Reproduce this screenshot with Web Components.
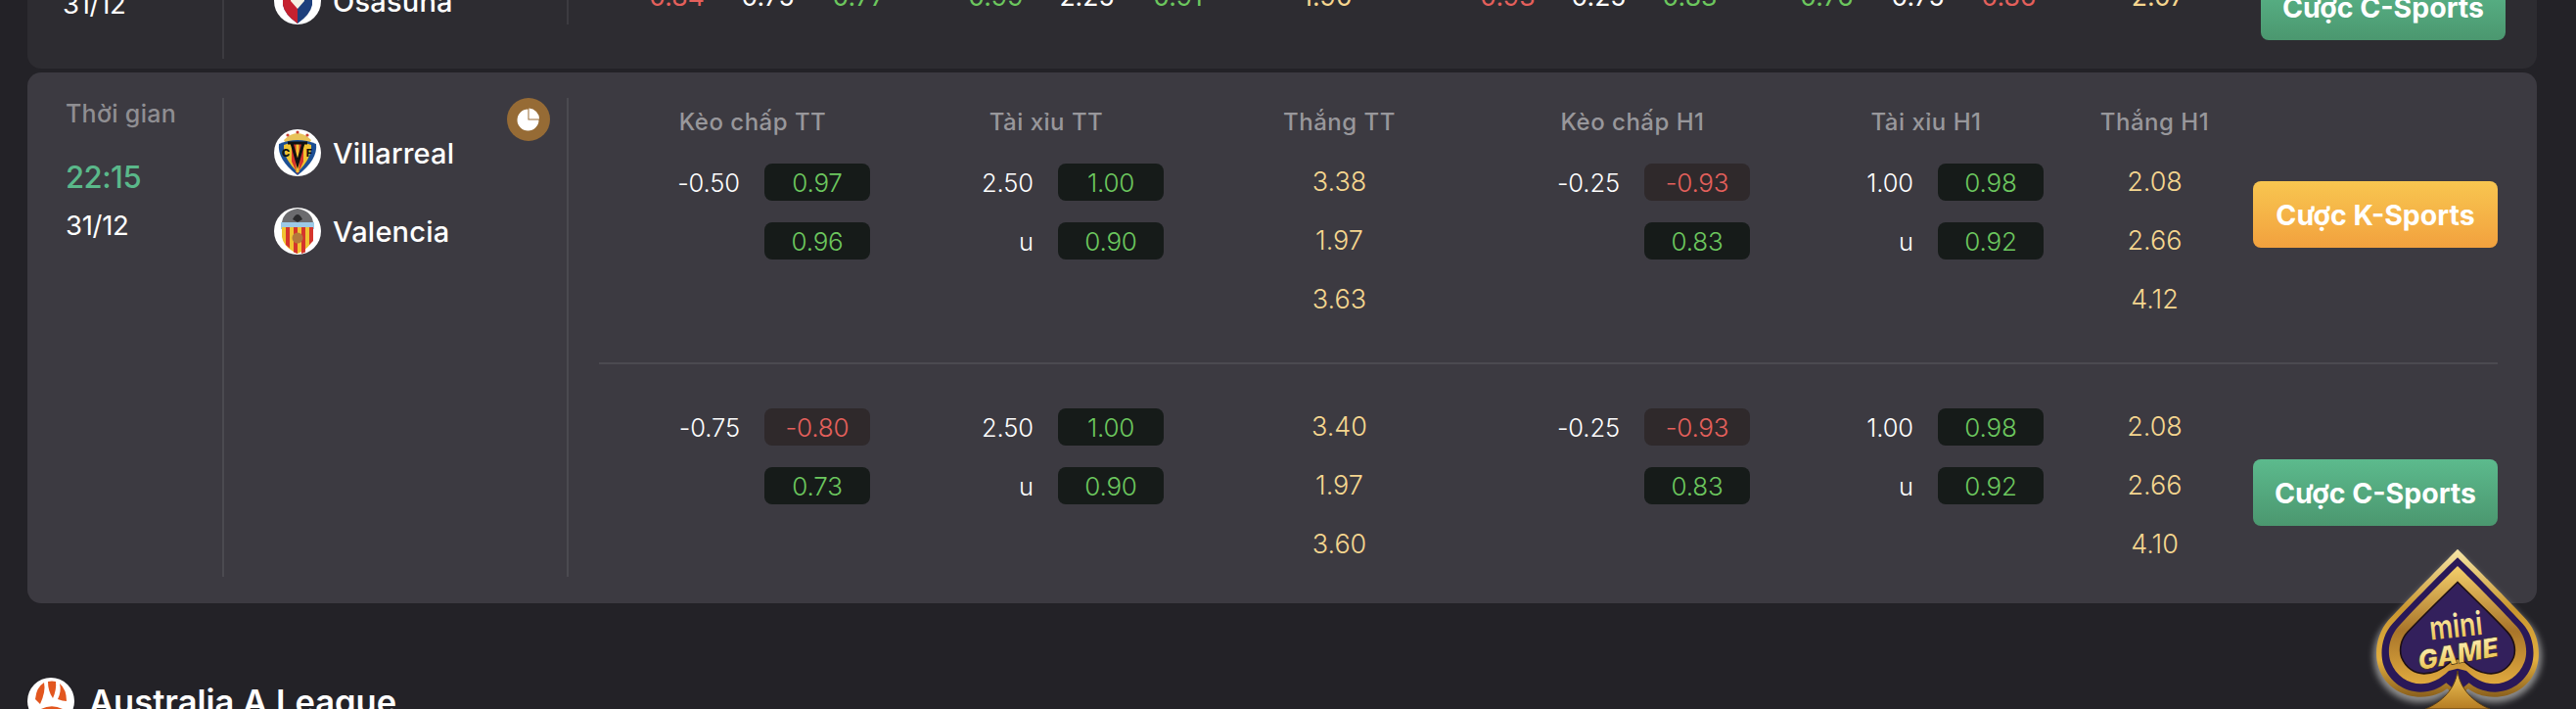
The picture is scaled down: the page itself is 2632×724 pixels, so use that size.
<!DOCTYPE html>
<html lang="vi">
<head>
<meta charset="utf-8">
<title>Kèo thể thao</title>
<style>
html, body { margin: 0; height: 724px; overflow: hidden; background: #232227; }
body { font-family: Inter, "Liberation Sans", sans-serif; color: #fff; position: relative; }
</style>
</head>
<body>

<sports-list>
  <match-card dim>
    <kick-off slot="time" day="31/12"></kick-off>
    <team-row slot="teams" name="Osasuna">
      <svg viewBox="0 0 48 48"><circle cx="24" cy="24" r="24" fill="#fff"/><path d="M9 9H39V28Q37 38 24 47Q11 38 9 28Z" fill="#1d3f7c"/><path d="M9 9H24V47Q11 38 9 28Z" fill="#c5212f"/><path d="M17 6H31V24L24 32L17 24Z" fill="#f6f1e2"/><circle cx="24" cy="14" r="5" fill="#b9903f"/></svg>
    </team-row>
    <flat-row slot="odds">
      <flat-group a="-0.84" b="0.75" c="0.77"></flat-group>
      <flat-group a="0.99" b="2.25" c="0.91"></flat-group>
      <flat-win>1.90</flat-win>
      <flat-group a="-0.93" b="0.25" c="0.83"></flat-group>
      <flat-group a="0.76" b="0.75" c="-0.86"></flat-group>
      <flat-win>2.07</flat-win>
      <bet-button slot="action" kind="c">Cược C-Sports</bet-button>
    </flat-row>
  </match-card>

  <match-card>
    <kick-off slot="time" label="Thời gian" hour="22:15" day="31/12"></kick-off>
    <team-row slot="teams" name="Villarreal">
      <svg viewBox="0 0 48 48"><circle cx="24" cy="24" r="24" fill="#fff"/><path d="M10 11Q24 -3 38 11L36 15H12Z" fill="#e8c35a"/><circle cx="14" cy="6" r="1.6" fill="#c9412f"/><circle cx="24" cy="3" r="1.6" fill="#c9412f"/><circle cx="34" cy="6" r="1.6" fill="#c9412f"/><path d="M5 15Q24 7 43 15Q45 31 24 47Q3 31 5 15Z" fill="#1d4f93"/><path d="M10 16Q24 10 38 16Q39 29 24 44Q9 29 10 16Z" fill="#f0c331"/><path d="M18 13H30V33L24 46L18 33Z" fill="#d5352c"/><path d="M22.5 13H25.5V44H22.5Z" fill="#f0c331"/><path d="M14 14H34M18 14L24 35L30 14" fill="none" stroke="#111" stroke-width="3"/><text x="12" y="28" font-family="Inter, sans-serif" font-size="11" font-weight="800" fill="#111" text-anchor="middle">C</text><text x="36" y="28" font-family="Inter, sans-serif" font-size="11" font-weight="800" fill="#111" text-anchor="middle">F</text></svg>
    </team-row>
    <team-row slot="teams" name="Valencia">
      <svg viewBox="0 0 48 48"><circle cx="24" cy="24" r="24" fill="#fff"/><path d="M8 15Q10 3 24 1Q38 3 40 15Z" fill="#6b6b6e"/><path d="M19 12Q24 2 29 12L24 15Z" fill="#2b2b2d"/><path d="M7 15H41V22H7Z" fill="#9cc9e6"/><path d="M8 20H40V30Q38 41 24 47Q10 41 8 30Z" fill="#f0c331"/><path d="M12 20h4v21.5l-4 -3.5ZM20 20h4v27l-4 -1.5ZM28 20h4v25.5l-4 1.5ZM36 20h4v14l-4 4Z" fill="#d5352c"/><circle cx="24" cy="31" r="5.5" fill="#b3793c"/></svg>
    </team-row>
    <stat-badge slot="teams"></stat-badge>

    <odds-block first>
      <odds-head>Kèo chấp TT</odds-head>
      <odds-head>Tài xỉu TT</odds-head>
      <odds-head>Thắng TT</odds-head>
      <odds-head>Kèo chấp H1</odds-head>
      <odds-head>Tài xỉu H1</odds-head>
      <odds-head>Thắng H1</odds-head>
      <line-cell line="-0.50" a="0.97" b="0.96"></line-cell>
      <line-cell line="2.50" a="1.00" sub="u" b="0.90"></line-cell>
      <win-cell a="3.38" b="1.97" c="3.63"></win-cell>
      <line-cell line="-0.25" a="-0.93" b="0.83"></line-cell>
      <line-cell line="1.00" a="0.98" sub="u" b="0.92"></line-cell>
      <win-cell a="2.08" b="2.66" c="4.12"></win-cell>
      <bet-button slot="action" kind="k">Cược K-Sports</bet-button>
    </odds-block>
    <odds-block>
      <line-cell line="-0.75" a="-0.80" b="0.73"></line-cell>
      <line-cell line="2.50" a="1.00" sub="u" b="0.90"></line-cell>
      <win-cell a="3.40" b="1.97" c="3.60"></win-cell>
      <line-cell line="-0.25" a="-0.93" b="0.83"></line-cell>
      <line-cell line="1.00" a="0.98" sub="u" b="0.92"></line-cell>
      <win-cell a="2.08" b="2.66" c="4.10"></win-cell>
      <bet-button slot="action" kind="c">Cược C-Sports</bet-button>
    </odds-block>
  </match-card>

  <league-head>
    <svg slot="logo" viewBox="0 0 48 48"><circle cx="24" cy="24" r="24" fill="#fff"/><path d="M8 22Q9 10 17 5Q19 14 13 27Z" fill="#e2561f"/><path d="M21 4Q25 3 29 4Q30 12 26 21Q21 14 21 4Z" fill="#e2561f"/><path d="M33 6Q40 12 40 24Q36 24 31 22Q35 14 33 6Z" fill="#e2561f"/><path d="M12 33Q24 26 36 32Q32 40 24 42Q16 40 12 33Z" fill="#e2561f"/></svg>
    Australia A League
  </league-head>
</sports-list>

<mini-game></mini-game>

<script>
window.customElements.define('sports-list',
    class extends HTMLElement {
        constructor() {
            super();
            this.attachShadow({mode: 'open'});
            this.shadowRoot.innerHTML = `
            <style>
            :host { display: flex; flex-direction: column; gap: 4px; margin: 0 40px 0 28px; }
            </style>
            <slot></slot>`;
        }
    }
);

window.customElements.define('match-card',
    class extends HTMLElement {
        __template = `
        <style>
        :host {
            display: flex;
            box-sizing: border-box;
            background: #3c3a41;
            border-radius: 14px;
            padding: 26px 40px 27px 0;
            --rule: #4b4a50;
        }
        .time {
            width: 201px;
            padding-left: 39px;
            box-sizing: border-box;
            border-right: 2px solid var(--rule);
            flex: none;
        }
        .teams {
            position: relative;
            box-sizing: border-box;
            width: 352px;
            flex: none;
            padding: 32px 0 0 51px;
            border-right: 2px solid var(--rule);
            display: flex;
            flex-direction: column;
            gap: 32px;
        }
        .odds {
            flex: 1;
            min-width: 0;
            padding-left: 31px;
            display: flex;
            flex-direction: column;
        }
        :host([dim]) {
            background: #2d2c31;
            height: 200px;
            margin-top: -130px;
            padding: 0 32px 10px 0;
            --rule: #3c3b40;
        }
        :host([dim]) .time {
            padding: 0 0 39px 36px;
            display: flex;
            align-items: flex-end;
        }
        :host([dim]) .teams {
            padding: 0 0 0 51px;
            margin-bottom: 35px;
            justify-content: flex-end;
        }
        :host([dim]) .odds { padding-left: 0; justify-content: flex-end; }
        </style>
        <div class="time"><slot name="time"></slot></div>
        <div class="teams"><slot name="teams"></slot></div>
        <div class="odds"><slot name="odds"></slot><slot></slot></div>`;

        constructor() {
            super();
            this.attachShadow({mode: 'open'});
            const child = document.createElement('template');
            child.innerHTML = this.__template;
            this.shadowRoot.appendChild(child.content.cloneNode(true));
        }
    }
);

window.customElements.define('kick-off',
    class extends HTMLElement {
        constructor() {
            super();
            this.attachShadow({mode: 'open'});
            const label = this.getAttribute('label');
            const hour = this.getAttribute('hour');
            const day = this.getAttribute('day');
            this.shadowRoot.innerHTML = `
            <style>
            :host { display: block; }
            div { white-space: nowrap; }
            .label { font-size: 25px; line-height: 32px; color: #8f8e92; font-weight: 500; letter-spacing: 0.3px; }
            .hour { font-size: 31px; line-height: 40px; margin-top: 29px; color: #5ab88a; font-weight: 500; letter-spacing: -0.5px; }
            .day { font-size: 27.5px; line-height: 34px; margin-top: 12px; color: #fff; font-weight: 400; letter-spacing: -0.3px; }
            :host(:not([label])) .day { margin-top: 0; }
            </style>
            ${label ? `<div class="label">${label}</div>` : ''}
            ${hour ? `<div class="hour">${hour}</div>` : ''}
            <div class="day">${day}</div>`;
        }
    }
);

window.customElements.define('team-row',
    class extends HTMLElement {
        constructor() {
            super();
            this.attachShadow({mode: 'open'});
            this.shadowRoot.innerHTML = `
            <style>
            :host { display: flex; align-items: center; gap: 12px; height: 48px; }
            ::slotted(svg) { width: 48px; height: 48px; flex: none; }
            span { font-size: 29px; font-weight: 500; color: #fff; white-space: nowrap; letter-spacing: 0.2px; }
            </style>
            <slot></slot><span>${this.getAttribute('name')}</span>`;
        }
    }
);

window.customElements.define('stat-badge',
    class extends HTMLElement {
        constructor() {
            super();
            this.attachShadow({mode: 'open'});
            this.shadowRoot.innerHTML = `
            <style>
            /* sits over the corner of the team column */
            :host { position: absolute; top: 0; right: 17px; width: 44px; height: 44px; }
            svg { display: block; }
            </style>
            <svg viewBox="0 0 44 44" width="44" height="44">
            <circle cx="22" cy="22" r="22" fill="#966b35"/>
            <path d="M21.5 11.5A11 11 0 1 0 32.5 22.5H21.5Z" fill="#fff"/>
            <path d="M22.5 10.5A11 11 0 0 1 33 21.5H22.5Z" fill="#fff"/>
            </svg>`;
        }
    }
);

window.customElements.define('odds-block',
    class extends HTMLElement {
        __template = `
        <style>
        :host {
            display: flex;
            align-items: center;
            box-sizing: border-box;
            padding-top: 45px;
            border-top: 2px solid #4b4a50;
        }
        :host([first]) {
            border-top: 0;
            padding-top: 0;
            margin-bottom: 32px;
        }
        .grid {
            display: grid;
            grid-template-columns: 300px 300px 299px 300px 300px 167px;
            margin-left: 7px;
            padding-bottom: 14px;
        }
        :host([first]) .grid { padding-bottom: 13px; }
        .action { margin-left: 17px; }
        </style>
        <div class="grid"><slot></slot></div>
        <div class="action"><slot name="action"></slot></div>`;

        constructor() {
            super();
            this.attachShadow({mode: 'open'});
            const child = document.createElement('template');
            child.innerHTML = this.__template;
            this.shadowRoot.appendChild(child.content.cloneNode(true));
        }
    }
);

window.customElements.define('odds-head',
    class extends HTMLElement {
        constructor() {
            super();
            this.attachShadow({mode: 'open'});
            this.shadowRoot.innerHTML = `
            <style>
            :host {
                display: flex;
                align-items: center;
                justify-content: center;
                height: 48px;
                margin-bottom: 19px;
                font-size: 24px;
                font-weight: 500;
                letter-spacing: 0.5px;
                color: #98979b;
                white-space: nowrap;
            }
            </style>
            <slot></slot>`;
        }
    }
);

window.customElements.define('odds-pill',
    class extends HTMLElement {
        constructor() {
            super();
            this.attachShadow({mode: 'open'});
            this.shadowRoot.innerHTML = `
            <style>
            :host {
                display: flex;
                align-items: center;
                justify-content: center;
                width: 108px;
                height: 38px;
                border-radius: 8px;
                background: #161b19;
                color: #6cc75e;
                font-size: 26px;
                font-weight: 300;
                letter-spacing: -0.2px;
            }
            :host([down]) { background: #2f292b; color: #e4605c; }
            </style>
            <slot></slot>`;
        }
    }
);

window.customElements.define('line-cell',
    class extends HTMLElement {
        constructor() {
            super();
            this.attachShadow({mode: 'open'});
            const pill = (v) => `<odds-pill ${v.startsWith('-') ? 'down' : ''}>${v}</odds-pill>`;
            const a = this.getAttribute('a');
            const b = this.getAttribute('b');
            this.shadowRoot.innerHTML = `
            <style>
            :host { display: flex; flex-direction: column; gap: 22px; height: 158px; padding-right: 30px; }
            .row { display: flex; justify-content: flex-end; align-items: center; gap: 25px; }
            span { font-size: 25.5px; font-weight: 300; color: #fff; letter-spacing: -0.1px; }
            </style>
            <div class="row"><span>${this.getAttribute('line')}</span>${pill(a)}</div>
            <div class="row"><span>${this.getAttribute('sub') || ''}</span>${pill(b)}</div>`;
        }
    }
);

window.customElements.define('win-cell',
    class extends HTMLElement {
        constructor() {
            super();
            this.attachShadow({mode: 'open'});
            const cells = ['a', 'b', 'c'].map(k => `<div>${this.getAttribute(k)}</div>`).join('');
            this.shadowRoot.innerHTML = `
            <style>
            :host { display: flex; flex-direction: column; gap: 22px; height: 158px; }
            div {
                height: 38px;
                line-height: 38px;
                text-align: center;
                color: #f5d68f;
                font-size: 27px;
                font-weight: 300;
            }
            </style>
            ${cells}`;
        }
    }
);

window.customElements.define('bet-button',
    class extends HTMLElement {
        constructor() {
            super();
            this.attachShadow({mode: 'open'});
            this.shadowRoot.innerHTML = `
            <style>
            :host {
                display: flex;
                align-items: center;
                justify-content: center;
                width: 250px;
                height: 68px;
                border-radius: 8px;
                color: #fff;
                font-size: 28.5px;
                font-weight: 700;
                white-space: nowrap;
                background: linear-gradient(#5cba8d, #4b976f);
            }
            :host([kind="k"]) { background: linear-gradient(#f8c650, #f2a13e); }
            </style>
            <slot></slot>`;
        }
    }
);

window.customElements.define('flat-row',
    class extends HTMLElement {
        constructor() {
            super();
            this.attachShadow({mode: 'open'});
            this.shadowRoot.innerHTML = `
            <style>
            :host { display: flex; align-items: flex-end; padding-left: 64px; }
            .grid {
                display: grid;
                grid-template-columns: 279px 279px 118px 311px 279px 118px;
                column-gap: 47px;
                padding-bottom: 45px;
            }
            .action { margin-left: 46px; padding-bottom: 19px; }
            </style>
            <div class="grid"><slot></slot></div>
            <div class="action"><slot name="action"></slot></div>`;
        }
    }
);

window.customElements.define('flat-group',
    class extends HTMLElement {
        constructor() {
            super();
            this.attachShadow({mode: 'open'});
            const cell = (k, cls) => `<div class="${cls}">${this.getAttribute(k).replace('-', '')}</div>`;
            const tone = (k) => this.getAttribute(k).startsWith('-') ? 'down' : 'up';
            this.shadowRoot.innerHTML = `
            <style>
            :host { display: grid; grid-template-columns: repeat(3, 93px); justify-content: end; }
            div { text-align: center; line-height: 38px; font-size: 26.5px; font-weight: 400; }
            .up { color: #6cc75e; }
            .down { color: #e4605c; }
            .mid { color: #fff; }
            </style>
            ${cell('a', tone('a'))}${cell('b', 'mid')}${cell('c', tone('c'))}`;
        }
    }
);

window.customElements.define('flat-win',
    class extends HTMLElement {
        constructor() {
            super();
            this.attachShadow({mode: 'open'});
            this.shadowRoot.innerHTML = `
            <style>
            :host { display: block; text-align: center; line-height: 38px; font-size: 26.5px; color: #f5d68f; }
            </style>
            <slot></slot>`;
        }
    }
);

window.customElements.define('league-head',
    class extends HTMLElement {
        constructor() {
            super();
            this.attachShadow({mode: 'open'});
            this.shadowRoot.innerHTML = `
            <style>
            :host {
                display: flex;
                align-items: center;
                gap: 15px;
                margin-top: 72px;
                height: 48px;
                font-size: 34.5px;
                font-weight: 600;
                color: #fff;
                white-space: nowrap;
            }
            ::slotted(svg) { width: 48px; height: 48px; flex: none; }
            </style>
            <slot name="logo"></slot><slot></slot>`;
        }
    }
);

window.customElements.define('mini-game',
    class extends HTMLElement {
        __template = `
        <style>
        /* floating widget pinned over the bottom right corner */
        :host { position: absolute; right: 0; bottom: 0; width: 292px; height: 284px; }
        svg { display: block; }
        text { font-family: Inter, "Liberation Sans", sans-serif; }
        </style>
        <svg viewBox="0 0 876 852" width="292" height="284">
        <defs>
        <linearGradient id="gold" x1="0" y1="0" x2="0" y2="1">
        <stop offset="0" stop-color="#f7e7a8"/><stop offset=".4" stop-color="#c9962f"/><stop offset=".75" stop-color="#e2ae3f"/><stop offset="1" stop-color="#8a5f1c"/>
        </linearGradient>
        <linearGradient id="ring" x1="0" y1="0" x2="0" y2="1">
        <stop offset="0" stop-color="#f4cf6b"/><stop offset=".55" stop-color="#a9752a"/><stop offset="1" stop-color="#e0a93e"/>
        </linearGradient>
        <linearGradient id="stem" x1="0" y1="0" x2="0" y2="1">
        <stop offset="0" stop-color="#f3c95a"/><stop offset="1" stop-color="#b57c23"/>
        </linearGradient>
        <linearGradient id="word" x1="0" y1="0" x2="0" y2="1">
        <stop offset="0" stop-color="#fff6c4"/><stop offset="1" stop-color="#e8b93a"/>
        </linearGradient>
        <filter id="soft" x="-10%" y="-10%" width="120%" height="120%"><feGaussianBlur stdDeviation="10"/></filter>
        </defs>
        <path d="M513 372C560 420 660 520 730 590C770 630 780 690 762 740C740 800 680 832 625 832C590 832 565 822 545 805L513 830L481 805C461 822 436 832 401 832C346 832 286 800 264 740C246 690 256 630 296 590C366 520 466 420 513 372Z" fill="#8d8d8d" filter="url(#soft)"/>
        <path d="M513 362C560 410 660 510 725 580C760 620 770 680 755 725C735 785 680 815 625 815C590 815 565 805 545 790L513 815L481 790C461 805 436 815 401 815C346 815 291 785 271 725C256 680 266 620 301 580C366 510 466 410 513 362Z" fill="url(#gold)"/>
        <path d="M513 388C560 432 650 525 712 590C745 625 752 680 740 718C722 770 675 800 628 800C595 800 570 790 548 772L513 800L478 772C456 790 431 800 398 800C351 800 304 770 286 718C274 680 281 625 314 590C376 525 466 432 513 388Z" fill="#2a1858"/>
        <path d="M513 414C556 456 640 540 695 600C722 630 730 675 718 708C702 750 665 775 625 775C595 775 565 760 540 735L513 728L486 735C461 760 431 775 401 775C361 775 324 750 308 708C296 675 304 630 331 600C386 540 470 456 513 414Z" fill="url(#ring)"/>
        <path d="M513 456C552 494 625 565 672 615C695 640 700 672 692 696C678 730 650 748 620 748C592 748 562 735 535 710L513 700L491 710C464 735 434 748 406 748C376 748 348 730 334 696C326 672 331 640 354 615C401 565 474 494 513 456Z" transform="translate(513 640) scale(.96) translate(-513 -640)" fill="#33205c" stroke="#1d0f12" stroke-width="5"/>
        <path d="M513 735C520 790 560 830 612 852L415 852C466 830 506 790 513 735Z" fill="url(#stem)" stroke="#5a3d14" stroke-width="3"/>
        <text x="508" y="632" text-anchor="middle" font-size="100" font-weight="600" fill="url(#word)" textLength="162" lengthAdjust="spacingAndGlyphs" transform="rotate(-6 508 600)">mini</text>
        <text x="514" y="712" text-anchor="middle" font-size="82" font-weight="900" font-style="italic" fill="url(#word)" stroke="#2a1608" stroke-width="1.5" textLength="250" lengthAdjust="spacingAndGlyphs" transform="rotate(-10 514 680)">GAME</text>
        </svg>`;

        constructor() {
            super();
            this.attachShadow({mode: 'open'});
            const child = document.createElement('template');
            child.innerHTML = this.__template;
            this.shadowRoot.appendChild(child.content.cloneNode(true));
        }
    }
);
</script>
</body>
</html>
